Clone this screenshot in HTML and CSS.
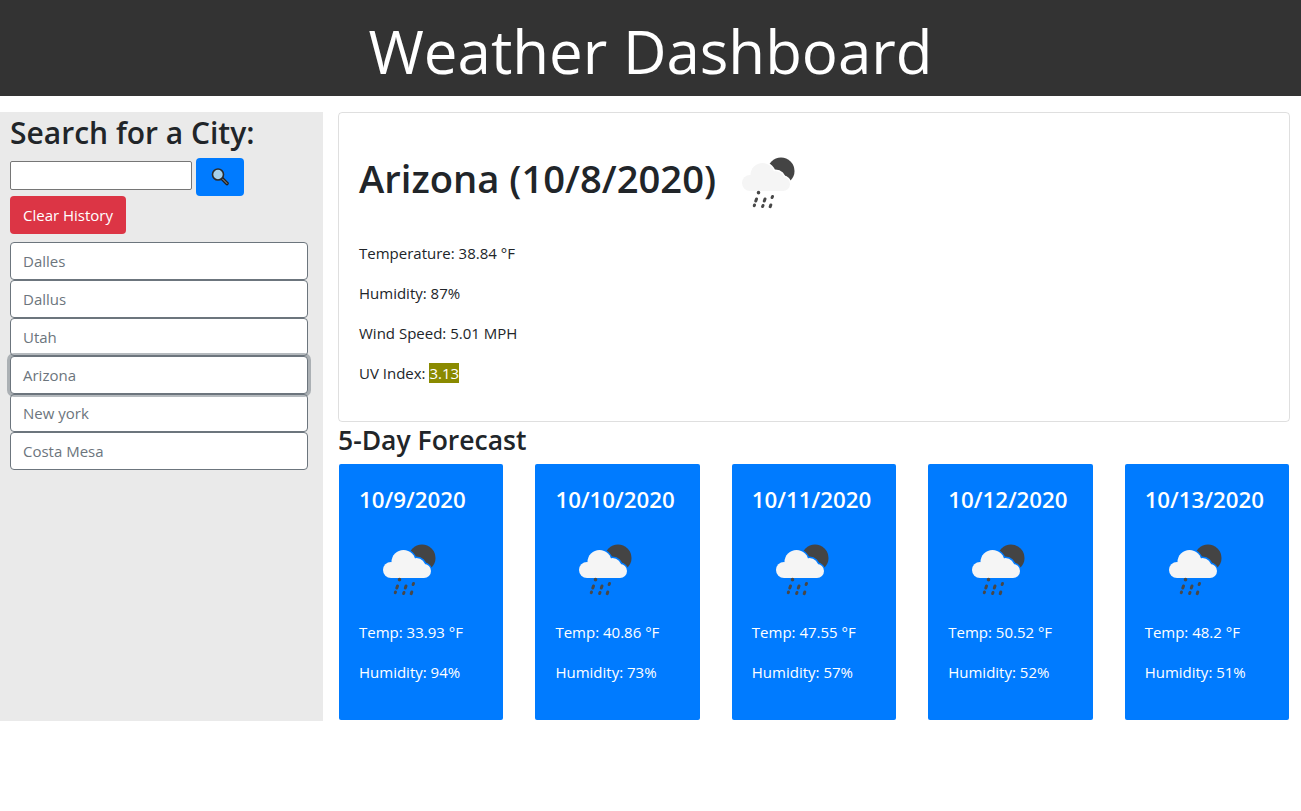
FILE: index.html
```html
<!DOCTYPE html>
<html lang="en">
<head>
<meta charset="utf-8">
<title>Weather Dashboard</title>
<link rel="stylesheet" href="styles.css">
</head>
<body>
<svg class="defs" width="0" height="0" aria-hidden="true">
  <defs>
    <g id="cloud">
      <circle cx="32" cy="50" r="8"/>
      <circle cx="44.500" cy="42" r="12"/>
      <circle cx="57.500" cy="47" r="9"/>
      <circle cx="65" cy="51" r="7"/>
      <rect x="32" y="46" width="33" height="12"/>
    </g>
    <mask id="moon-cut" maskUnits="userSpaceOnUse" x="0" y="0" width="100" height="100">
      <rect width="100" height="100" fill="#fff"/>
      <use href="#cloud" fill="#000" stroke="#000" stroke-width="3"/>
    </mask>
  </defs>
  <symbol id="rain" viewBox="0 0 100 100">
    <circle cx="63" cy="38" r="13.500" fill="#444" mask="url(#moon-cut)"/>
    <use href="#cloud" fill="#f5f5f5"/>
    <g stroke="#484848" stroke-linecap="round" fill="none">
      <path d="M40.500 59.500v.2" stroke-width="3.500"/>
      <path d="M38.500 66l-.7 2M47 66l-.7 2M54.500 63.500l-.4 1M36.500 72l-.2.7M45 72.500l-.4 1M52.800 72l-.6 1.700" stroke-width="3"/>
    </g>
  </symbol>
</svg>
<header class="topbar"><h1>Weather Dashboard</h1></header>
<div class="layout">
  <aside class="sidebar">
    <h2 class="side-title">Search for a City:</h2>
    <div class="search-row">
      <input class="search-input" type="text" aria-label="City">
      <button class="btn btn-blue" type="button" aria-label="Search">
        <svg class="glass" viewBox="0 0 20 20" width="20" height="20">
          <path d="M12 11.500l5 5" stroke="#1a1a1a" stroke-width="3.600" stroke-linecap="round"/>
          <path d="M12.500 12l4.500 4.500" stroke="#6b6b6b" stroke-width="1.200" stroke-linecap="round"/>
          <circle cx="8" cy="7.500" r="5.500" fill="#a5d0ea" stroke="#2b2b2b" stroke-width="1.600"/>
        </svg>
      </button>
    </div>
    <button class="btn btn-red" type="button">Clear History</button>
    <div class="history">
      <button class="city" type="button">Dalles</button>
      <button class="city" type="button">Dallus</button>
      <button class="city" type="button">Utah</button>
      <button class="city city-active" type="button">Arizona</button>
      <button class="city" type="button">New york</button>
      <button class="city" type="button">Costa Mesa</button>
    </div>
  </aside>
  <main class="content">
    <section class="current">
      <h2 class="current-title">Arizona (10/8/2020) <svg class="icon icon-title"><use href="#rain"/></svg></h2>
      <p>Temperature: 38.84 °F</p>
      <p>Humidity: 87%</p>
      <p>Wind Speed: 5.01 MPH</p>
      <p>UV Index: <span class="uv">3.13</span></p>
    </section>
    <h3 class="forecast-title">5-Day Forecast</h3>
    <div class="forecast">
      <article class="day">
        <h4>10/9/2020</h4>
        <svg class="icon"><use href="#rain"/></svg>
        <p>Temp: 33.93 °F</p>
        <p>Humidity: 94%</p>
      </article>
      <article class="day">
        <h4>10/10/2020</h4>
        <svg class="icon"><use href="#rain"/></svg>
        <p>Temp: 40.86 °F</p>
        <p>Humidity: 73%</p>
      </article>
      <article class="day">
        <h4>10/11/2020</h4>
        <svg class="icon"><use href="#rain"/></svg>
        <p>Temp: 47.55 °F</p>
        <p>Humidity: 57%</p>
      </article>
      <article class="day">
        <h4>10/12/2020</h4>
        <svg class="icon"><use href="#rain"/></svg>
        <p>Temp: 50.52 °F</p>
        <p>Humidity: 52%</p>
      </article>
      <article class="day">
        <h4>10/13/2020</h4>
        <svg class="icon"><use href="#rain"/></svg>
        <p>Temp: 48.2 °F</p>
        <p>Humidity: 51%</p>
      </article>
    </div>
  </main>
</div>
</body>
</html>
```
FILE: styles.css
```css
* { box-sizing: border-box; }
html, body { margin: 0; }
body {
  font-family: "Open Sans", "Noto Sans", sans-serif;
  font-size: 15px;
  line-height: 24px;
  color: #212529;
  background: #fff;
}
.defs { position: absolute; }
h1, h2, h3, h4, p { margin: 0; }
h2, h3, h4 { font-weight: 600; margin-bottom: 8px; }
p { margin-bottom: 16px; }

.topbar { background: #333; color: #fff; text-align: center; height: 96px; }
.topbar h1 { font-size: 60px; font-weight: 400; line-height: 102px; height: 96px; }

.layout { display: grid; grid-template-columns: 323px minmax(0, 1fr); margin-top: 16px; }

.sidebar { background: #eaeaea; padding: 0 15px 0 10px; }
.side-title { font-size: 30px; line-height: 42.400px; margin-bottom: 4px; }
.search-row { display: flex; align-items: flex-start; gap: 4px; }
.search-input {
  width: 182px;
  height: 29px;
  margin-top: 3px;
  border: 1px solid #767676;
  border-radius: 2px;
  background: #fff;
  padding: 1px 2px;
}
.btn {
  font: inherit;
  height: 38px;
  border: 1px solid transparent;
  border-radius: 4px;
  color: #fff;
  padding: 6px 12px;
}
.btn-blue { background: #007bff; width: 48px; }
.glass { display: block; margin: 0 auto; }
.btn-red { display: block; width: 116px; background: #dc3545; padding: 6px 0; }

.history { margin-top: 8px; }
.city {
  display: block;
  width: 298px;
  height: 38px;
  font: inherit;
  color: #6c757d;
  background: #fff;
  border: 1px solid #6c757d;
  border-radius: 4px;
  padding: 6px 12px;
  text-align: left;
}
.city-active {
  position: relative;
  box-shadow: 0 0 0 3px rgba(108, 117, 125, .5);
}

.content { padding: 0 11px 1px 15px; }
.current {
  border: 1px solid rgba(0, 0, 0, .125);
  border-radius: 4px;
  padding: 20px;
}
.current-title { font-size: 38.200px; line-height: 48px; }
.icon { width: 100px; height: 100px; vertical-align: middle; }
.icon-title { margin-left: -8px; }
.uv { background: #8a8a00; color: #fff; }
.forecast-title { font-size: 26.500px; line-height: 35.600px; margin: 1px 0 5px; }

.forecast { display: flex; gap: 32px; padding: 0 1px; }
.day {
  flex: 1 1 0;
  min-width: 0;
  background: #007bff;
  color: #fff;
  border-radius: 2px;
  padding: 20px;
}
.day h4 { font-size: 22.300px; line-height: 32.800px; margin-bottom: 4px; }
.day .icon { display: block; }
```
